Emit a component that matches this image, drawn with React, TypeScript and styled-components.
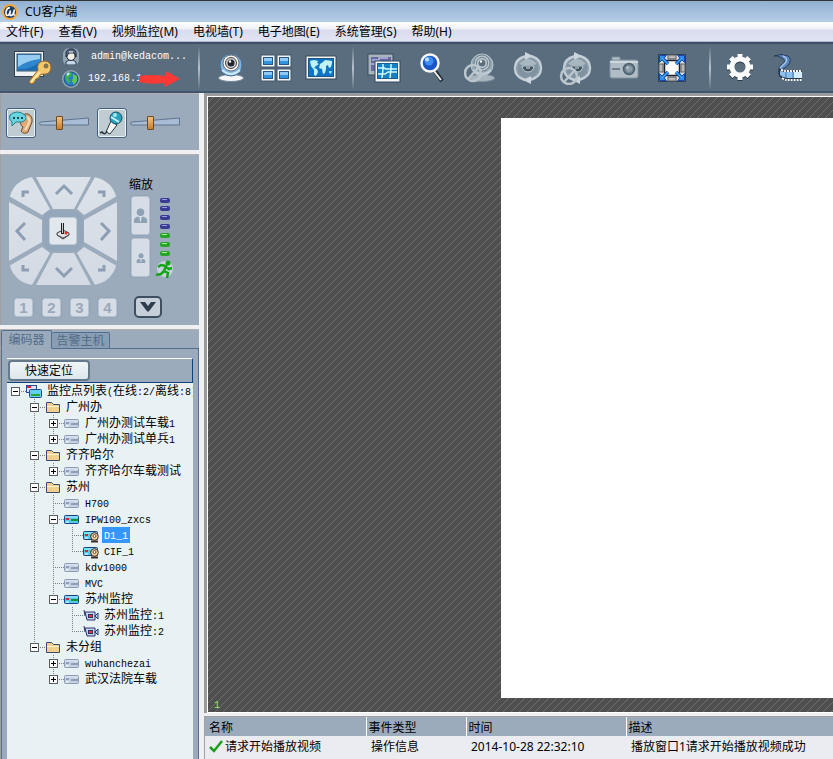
import React, { useState } from "react";
import styled, { createGlobalStyle, css } from "styled-components";

const CJK = '"Noto Sans CJK SC", sans-serif';

const GlobalStyle = createGlobalStyle`
  * { box-sizing: border-box; }
  body { margin: 0; font: 12px/16px "Noto Sans", ${CJK}; color: #000; }
  button { font: inherit; color: inherit; padding: 0; cursor: pointer; }
`;

/* ---------- frame ---------- */

const Shell = styled.div`
  display: flex;
  flex-direction: column;
  height: 100vh;
  overflow: hidden;
  background: #f0f0f2;
`;

const TitleBar = styled.header`
  display: flex;
  align-items: center;
  gap: 7px;
  height: 22px;
  flex: none;
  padding: 0 2px;
  border-top: 1px solid #333;
  background: linear-gradient(#92b0d1, #b5cee7);
`;

const Title = styled.h1`
  margin: 0;
  font-size: 12px;
  font-weight: 400;
`;

const MenuBar = styled.nav`
  display: flex;
  gap: 15px;
  height: 20px;
  flex: none;
  padding: 0 6px;
  border-bottom: 1px solid #b4b7c8;
  background: linear-gradient(#fff 0, #f0f2f8 7px, #d8dcee 8px, #e0e4f4 100%);
`;

const MenuItem = styled.button`
  border: 0;
  background: none;
  line-height: 19px;
  white-space: nowrap;
`;

const Toolbar = styled.div`
  display: flex;
  align-items: center;
  height: 51px;
  flex: none;
  border-top: 2px solid #3d4f6b;
  border-bottom: 2px solid #3f5570;
  background: #596d7e;
  overflow: hidden;
`;

const Login = styled.section`
  display: flex;
  align-items: center;
  width: 198px;
  flex: none;
  padding-left: 14px;
  gap: 10px;
`;

const LoginLines = styled.div`
  display: flex;
  flex-direction: column;
  gap: 2px;
`;

const LoginLine = styled.div<{ $gap: number }>`
  display: flex;
  align-items: center;
  gap: ${(p) => p.$gap}px;
  height: 20px;
  color: #fff;
  font: 10px/20px "Liberation Mono", monospace;
`;

const Address = styled.span`
  position: relative;
`;

const Redaction = styled.svg`
  position: absolute;
  left: 50px;
  top: 2px;
`;

const Divider = styled.div`
  width: 2px;
  height: 44px;
  flex: none;
  background: linear-gradient(#596d7e, #b5c2cc, #596d7e);
`;

const ToolGroup = styled.div<{ $pad: string }>`
  display: flex;
  flex: none;
  padding: ${(p) => p.$pad};
`;

const ToolButton = styled.button<{ $w: number }>`
  display: grid;
  place-items: center;
  width: ${(p) => p.$w}px;
  height: 40px;
  border: 0;
  background: none;
`;

const Body = styled.div`
  display: flex;
  flex: 1;
  min-height: 0;
`;

/* ---------- sidebar ---------- */

const Sidebar = styled.aside`
  display: flex;
  flex-direction: column;
  gap: 4px;
  width: 199px;
  flex: none;
  margin-right: 5px;
`;

const Panel = styled.section`
  background: #9babbc;
  border-top: 1px solid #b4b0b0;
  border-left: 1px solid #a19f9f;
`;

const AudioPanel = styled(Panel)`
  display: flex;
  gap: 8px;
  height: 57px;
  flex: none;
  padding: 14px 5px 0;
`;

const AudioUnit = styled.div`
  display: flex;
  align-items: center;
  gap: 3px;
  height: 30px;
`;

const AudioButton = styled.button`
  display: grid;
  place-items: center;
  width: 30px;
  height: 30px;
  border: 1px solid #3f6283;
  border-radius: 3px;
  background: #bfcdd3;
  box-shadow: inset 0 0 0 1px #f2f5f6;
`;

const SliderBox = styled.div`
  display: grid;
  width: 50px;
  height: 16px;

  > * { grid-area: 1 / 1; }
`;

const Range = styled.input`
  appearance: none;
  width: 50px;
  height: 16px;
  margin: 0;
  background: transparent;

  &::-webkit-slider-thumb {
    appearance: none;
    width: 7px;
    height: 14px;
    border: 1px solid #6b4a22;
    border-radius: 1px;
    background: linear-gradient(#f2c184, #c97f2e);
  }
`;

const PtzPanel = styled(Panel)`
  display: flex;
  flex-direction: column;
  gap: 11px;
  height: 171px;
  flex: none;
  padding: 22px 8px 0;
`;

const PtzRow = styled.div`
  display: flex;
  gap: 12px;
`;

const Pad = styled.div`
  display: grid;
  width: 108px;
  height: 108px;
  border-radius: 26px;
  overflow: hidden;

  > * { grid-area: 1 / 1; }
`;

const PadButton = styled.button<{ $shape: string }>`
  border: 0;
  background: linear-gradient(#dce2e9, #d3dae3);
  clip-path: polygon(${(p) => p.$shape});
`;

const PadArt = styled.svg`
  z-index: 1;
  pointer-events: none;
`;

const Stick = styled.button`
  display: grid;
  place-items: center;
  place-self: center;
  z-index: 1;
  width: 28px;
  height: 28px;
  border: 1px solid #c2ccd7;
  border-radius: 3px;
  background: #e2e7ed;
  outline: 6px solid #94a6b9;
`;

const Zoom = styled.div`
  display: grid;
  grid-template-columns: 20px auto;
  column-gap: 5px;
`;

const ZoomTitle = styled.div`
  grid-column: 1 / -1;
  height: 18px;
  line-height: 16px;
`;

const ZoomButtons = styled.div`
  display: flex;
  flex-direction: column;
  gap: 3px;
  padding-left: 2px;
`;

const softKey = css`
  display: grid;
  place-items: center;
  border: 1px solid #b7c2cf;
  border-radius: 3px;
  background: #d6dde6;
  box-shadow: 0 0 0 1px #93a5b9;
`;

const ZoomButton = styled.button`
  ${softKey}
  width: 19px;
  height: 39px;
`;

const PresetRow = styled.div`
  display: flex;
  align-items: center;
  gap: 9px;
  padding-left: 5px;
`;

const Preset = styled.button`
  ${softKey}
  width: 19px;
  height: 19px;
  color: #99a8ba;
  font: 700 15px/17px "Liberation Sans", sans-serif;
`;

const MoreButton = styled.button`
  display: grid;
  place-items: center;
  width: 28px;
  height: 22px;
  margin-left: 8px;
  border: 2px solid #3d4f60;
  border-radius: 5px;
  background: #c7d0da;
`;

const TreePanel = styled(Panel)`
  display: flex;
  flex-direction: column;
  flex: 1;
  min-height: 0;
`;

const Tabs = styled.div`
  display: flex;
  align-items: flex-end;
  height: 19px;
  flex: none;

  &::after {
    content: "";
    flex: 1;
    border-bottom: 1px solid #526f91;
  }
`;

const Tab = styled.button<{ $on?: boolean }>`
  height: ${(p) => (p.$on ? 19 : 17)}px;
  width: ${(p) => (p.$on ? 51 : 58)}px;
  border: 1px solid #526f91;
  border-bottom-color: ${(p) => (p.$on ? "#9babbc" : "#526f91")};
  border-left-width: ${(p) => (p.$on ? 1 : 0)}px;
  border-radius: 2px 2px 0 0;
  background: ${(p) => (p.$on ? "#9babbc" : "#899db3")};
  color: #526b88;
  line-height: 15px;
  white-space: nowrap;
`;

const TabBody = styled.div`
  display: flex;
  flex-direction: column;
  flex: 1;
  min-height: 0;
  padding: 9px 5px 0;
  border: solid #526f91;
  border-width: 0 1px;
`;

const LocateBar = styled.div`
  height: 25px;
  flex: none;
  padding: 1px;
  border: solid #12427c;
  border-width: 1px 1px 1px 0;
  border-top-color: #fff;
`;

const LocateButton = styled.button`
  display: block;
  width: 82px;
  height: 21px;
  border: 2px solid #65798a;
  border-radius: 4px;
  background: linear-gradient(#f1f6f7, #dce7eb);
  line-height: 17px;
`;

const Tree = styled.ul`
  flex: 1;
  min-height: 0;
  margin: 0;
  padding: 0;
  overflow: hidden;
  list-style: none;
  background: #e8f2f5;
`;

const Node = styled.li`
  display: flex;
  height: 16px;
  white-space: nowrap;

  > * { flex: none; }
`;

const dotted = (dir: string) => `repeating-linear-gradient(${dir}, #808080 0 1px, transparent 1px 2px)`;

const Guide = styled.span<{ $v: "none" | "half" | "full"; $h?: boolean }>`
  display: grid;
  place-items: center start;
  width: 19px;
  height: 16px;
  flex: none;
  padding-left: 4px;
  background:
    ${dotted("180deg")} 8px 0 / 1px ${(p) => ({ none: 0, half: 8, full: 16 })[p.$v]}px no-repeat,
    ${dotted("90deg")} 8px 8px / ${(p) => (p.$h ? 11 : 0)}px 1px no-repeat;
`;

const Expander = styled.button`
  display: block;
  width: 9px;
  height: 9px;
  border: 1px solid #5c5c5c;
  background:
    linear-gradient(#000, #000) center / 5px 1px no-repeat,
    linear-gradient(#000, #000) center / 1px ${(p) => (p["aria-expanded"] ? 1 : 5)}px no-repeat,
    #fff;
`;

const NodeLabel = styled.button<{ $on?: boolean }>`
  margin-left: 3px;
  padding: 0 2px;
  border: 0;
  background: ${(p) => (p.$on ? "#3397fd" : "none")};
  color: ${(p) => (p.$on ? "#fff" : "#000")};
  line-height: 16px;
  white-space: nowrap;
`;

const Mono = styled.span`
  font: 10px/16px "Liberation Mono", monospace;
`;

/* ---------- work area ---------- */

const Main = styled.main`
  display: flex;
  flex-direction: column;
  flex: 1;
  min-width: 0;
`;

const VideoWall = styled.section`
  position: relative;
  display: flex;
  flex: 1;
  min-height: 0;
  border: 3px solid #9a9a9a;
  border-width: 3px 0 0 3px;
  padding: 22px 0 15px;
  box-shadow: inset 1px 1px #fff, inset 0 -1px #fff;
  background: linear-gradient(135deg, transparent 45%, #6e6e6e 45% 55%, transparent 55%) 0 0 / 8px 8px, #4f4f4f;
`;

const Video = styled.div`
  flex: 1;
  margin-left: 47%;
  background: #fff;
`;

const WindowNo = styled.span`
  position: absolute;
  left: 7px;
  bottom: 0;
  color: #9be86e;
  font: 10px/14px "Liberation Mono", monospace;
`;

const LogPane = styled.section`
  height: 43px;
  flex: none;
  margin-top: 3px;
  border-top: 1px solid #a0a0a0;
  border-left: 1px solid #a0a0a0;
  overflow: hidden;
  background: #ebecf1;
`;

const LogTable = styled.table`
  width: 100%;
  table-layout: fixed;
  border-collapse: collapse;

  th {
    height: 19px;
    padding: 2px 3px 0 2px;
    border-left: 1px solid #fff;
    background: #9babbc;
    font-weight: 400;
    line-height: 16px;
    text-align: left;
  }
  th:first-child { border-left: 0; padding-left: 4px; }
  td {
    height: 20px;
    padding: 1px 0 0 5px;
    line-height: 16px;
    white-space: nowrap;
  }
  td:first-child { padding-left: 4px; }
`;

const Col = styled.col<{ $w?: number }>`
  width: ${(p) => (p.$w ? `${p.$w}px` : "auto")};
`;

const Event = styled.span`
  display: flex;
  align-items: center;
  gap: 2px;
`;

/* ---------- icons ---------- */

const Logo = () => (
  <svg width="16" height="16" viewBox="0 0 16 16">
    <circle cx="8" cy="8" r="8" fill="#f4a73a" />
    <circle cx="8" cy="8" r="6" fill="#173a63" />
    <path d="M8 4C4 3 2.500 11 5.500 11.500 7.500 11.500 8 8 8.500 6.500 7.500 10 7.500 12 9.500 11.500 11.500 10.500 12 7 12.500 5.500 11.800 8 11 11.500 13 11" fill="none" stroke="#fff" strokeWidth="1.600" />
  </svg>
);

const LoginIcon = () => (
  <svg width="38" height="36" viewBox="0 0 38 36">
    <rect x=".5" y="1.500" width="29" height="25" fill="#eef1f2" stroke="#2e4252" />
    <rect x="3" y="4" width="24" height="17" fill="#2e87cd" stroke="#39546c" />
    <path d="M4 5h22v4Q14 10 4 17z" fill="#97cdf1" />
    <path d="M4 19Q16 20 26 12v8H4z" fill="#1c6bb4" />
    <path d="M24 20Q22 12 30 11q7 0 7 7-1 7-8 6l-3 1-1 3-3 1-2 4-3 1-2-2 2-3z" fill="#f5c76c" stroke="#95692a" />
    <path d="M26 22l-9 10" stroke="#fff0b9" strokeWidth="1.500" />
    <circle cx="32" cy="16" r="2" fill="#6b7c80" stroke="#95692a" />
  </svg>
);

const UserIcon = () => (
  <svg width="18" height="18" viewBox="0 0 18 18">
    <rect x="1" y="0" width="16" height="18" rx="6" fill="#93a5b2" />
    <path d="M4 17v-3l3-2h4l3 2v3z" fill="#c7d7e7" stroke="#263b54" />
    <path d="M5 5q4-4 8 0v5q-4 5-8 0z" fill="#f4eee5" stroke="#202c3a" />
    <path d="M4 9V4q2-4 7-3 4 1 3 8l-2-4H7z" fill="#566883" stroke="#202c3a" />
    <path d="M7 4h4" stroke="#fff" />
  </svg>
);

const GlobeIcon = () => (
  <svg width="18" height="18" viewBox="0 0 18 18">
    <circle cx="9" cy="9" r="9" fill="#93a5b2" />
    <circle cx="9" cy="9" r="7" fill="#2a7cc8" stroke="#1b4c87" />
    <path d="M3 6l4-4 3 1-1 3-3 2 2 2-1 4-3-4z" fill="#3bb54b" />
    <path d="M11 4l4 2v5l-3 4-2-4 1-3z" fill="#5cc94c" />
    <path d="M5 5l2-2" stroke="#d4f1ff" strokeWidth="2" />
  </svg>
);

const CamBody = ({ grey }: { grey?: boolean }) => (
  <>
    <ellipse cx="16" cy="26" rx="12.500" ry="3.500" fill={grey ? "#a9b5bf" : "#f8f8f8"} stroke={grey ? "#8394a0" : "#718599"} />
    <circle cx="16" cy="13" r="11" fill={grey ? "#94a6b2" : "#7fb3df"} stroke={grey ? "#b9c6ce" : "#486f96"} />
    <path d="M7 18q9 8 18 0" stroke={grey ? "#c2cdd4" : "#cce9fb"} strokeWidth="2" fill="none" />
    <circle cx="16" cy="11" r="8" fill={grey ? "#bac6ce" : "#f7f7f5"} stroke={grey ? "#71838f" : "#6f6e70"} />
    <circle cx="16" cy="11" r="5.500" fill={grey ? "#c9d2d8" : "#d0d2d4"} stroke={grey ? "#657884" : "#454548"} />
    <circle cx="16" cy="11" r="3.500" fill={grey ? "#5b6e7c" : "#22262f"} />
    <circle cx="15" cy="9.500" r="1.200" fill="#fff" />
  </>
);

const Ban = () => (
  <g fill="none" stroke="#bac5cc" strokeWidth="2.500">
    <circle cx="9" cy="21" r="8" />
    <path d="M4 27L15 15" />
  </g>
);

const Webcam = () => <svg width="30" height="32" viewBox="1 0 30 32"><CamBody /></svg>;

const WebcamOff = () => (
  <svg width="32" height="32" viewBox="0 0 32 32">
    <g transform="translate(2 0)"><CamBody grey /></g>
    <Ban />
  </svg>
);

const GridIcon = () => (
  <svg width="32" height="28" viewBox="0 0 32 28">
    {[[1, 1], [17, 1], [1, 15], [17, 15]].map(([x, y]) => (
      <g key={`${x}-${y}`}>
        <rect x={x} y={y} width="14" height="12" fill="#f5f5f3" stroke="#42576b" />
        <rect x={x + 2.5} y={y + 2.5} width="9" height="7" fill="#3293df" stroke="#245985" />
        <path d={`M${x + 3} ${y + 3}h8v3h-8z`} fill="#8fc9f5" />
      </g>
    ))}
  </svg>
);

const MapIcon = () => (
  <svg width="32" height="26" viewBox="0 0 32 26">
    <rect x="1" y="1" width="30" height="23" fill="#f4f4f2" stroke="#34495c" />
    <rect x="3.500" y="3.500" width="25" height="18" fill="#0f74c3" stroke="#1d5683" />
    <path d="M5 6l4-1 4 1-1 2 2 1-3 2-2 2 3 1 1 3-2 4-2-1v-5l-3-4z" fill="#bff3f5" />
    <path d="M15 9l3-2 2-2 7 1v2l-1 4-2 1-1-3-2 1v3l-1 4-2 1-1-5-3-1z" fill="#bff3f5" />
    <path d="M24 16l3 0-1 3-2-1z" fill="#7adde8" />
  </svg>
);

const WallIcon = () => (
  <svg width="34" height="30" viewBox="0 0 34 30">
    <rect x="1" y="1" width="25" height="21" fill="#a9b4bb" stroke="#394d5e" />
    <rect x="4" y="4" width="20" height="14" fill="#6769a5" />
    <path d="M5 7h7v-2h9M4 11h4" stroke="#b3b6dc" strokeWidth="1.500" fill="none" />
    <rect x="8" y="8" width="25" height="21" fill="#f7f9f9" stroke="#30485d" />
    <rect x="10.500" y="10.500" width="20" height="15" fill="#1682c6" stroke="#1b5f93" />
    <path d="M11 15h6l2 1h11M11 21h7l3-2h9M16 11v5l-1 9M24 11v5l-1 9" fill="none" stroke="#d2fbfb" strokeWidth="1.500" />
  </svg>
);

const SearchIcon = () => (
  <svg width="24" height="30" viewBox="0 0 24 30">
    <path d="M15 18l7 10" stroke="#1e2a36" strokeWidth="4" />
    <path d="M14 18l7 9" stroke="#f2eee5" strokeWidth="2" />
    <circle cx="10" cy="10" r="8.500" fill="#1a55c8" stroke="#f7f7f7" strokeWidth="2.500" />
    <circle cx="9" cy="8" r="4.500" fill="#3f8cf0" />
    <circle cx="7" cy="6.500" r="2" fill="#c0e0ff" />
  </svg>
);

const CycleBody = () => (
  <>
    <circle cx="16" cy="17" r="11" fill="#8093a1" stroke="#93a5b1" />
    <path d="M7 13q9-10 18 0l-3 1H10z" fill="#a9b7c1" />
    <path d="M10 15h12q-1 6-6 6t-6-6z" fill="#42535f" stroke="#c2ccd2" />
    <path d="M14 15h4v3h-4z" fill="#8fa0ac" />
    <path d="M13 29Q3 26 3 17T14 5" fill="none" stroke="#c3ced6" strokeWidth="2.500" />
    <path d="M19 5Q29 8 29 17T18 29" fill="none" stroke="#c3ced6" strokeWidth="2.500" />
    <path d="M13 1l8 4-8 4zM19 25l-8 4 8 4z" fill="#cbd5dc" />
  </>
);

const Cycle = () => <svg width="32" height="34" viewBox="0 0 32 34"><CycleBody /></svg>;

const CycleOff = () => (
  <svg width="34" height="34" viewBox="0 0 34 34">
    <g transform="translate(2 0)"><CycleBody /></g>
    <g transform="translate(1 4)"><Ban /></g>
  </svg>
);

const CameraIcon = () => (
  <svg width="30" height="24" viewBox="0 0 30 24">
    <path d="M3 4V1h8v3" fill="#b7c3cb" stroke="#7a8c99" />
    <rect x="1" y="4" width="28" height="18" rx="2" fill="#b0bdc6" stroke="#82939f" />
    <path d="M1 6h28" stroke="#ced7dd" strokeWidth="2" />
    <path d="M3 13h8" stroke="#596d7e" strokeWidth="1.500" />
    <circle cx="20" cy="13" r="5.500" fill="#708391" stroke="#4c6170" strokeWidth="1.500" />
    <circle cx="20" cy="13" r="3" fill="#8fa0ac" />
    <circle cx="18.500" cy="11.500" r="1" fill="#dfe7eb" />
  </svg>
);

const ExpandIcon = () => (
  <svg width="28" height="28" viewBox="0 0 28 28">
    <rect x=".5" y=".5" width="27" height="27" fill="#dededd" stroke="#2e4050" />
    <path d="M10 1h8v4h-8zM10 23h8v4h-8zM1 10h4v8H1zM23 10h4v8h-4z" fill="#b9b9b8" stroke="#5a5f64" />
    <rect x="6.500" y="6.500" width="15" height="15" rx="2" fill="#fafafa" stroke="#1c2228" strokeWidth="1.500" />
    {[0, 90, 180, 270].map((a) => (
      <g key={a} transform={`rotate(${a} 14 14)`}>
        <path d="M4 4l6 6" stroke="#1649b0" strokeWidth="3.500" />
        <path d="M1.500 1.500h7l-7 7z" fill="#2f8cf4" stroke="#1649b0" />
        <path d="M4 4l6 6" stroke="#3fb2fa" strokeWidth="1.500" />
      </g>
    ))}
  </svg>
);

const GearIcon = () => (
  <svg width="28" height="28" viewBox="0 0 28 28">
    {[["#2c3845", 1], ["#fafafa", 0]].map(([c, dy]) => (
      <g key={c} transform={`translate(0 ${dy})`} fill="none" stroke={c as string}>
        <circle cx="14" cy="13" r="8" strokeWidth="5" />
        {[0, 45, 90, 135, 180, 225, 270, 315].map((a) => (
          <path key={a} d="M14 0v4" strokeWidth="5" transform={`rotate(${a} 14 13)`} />
        ))}
      </g>
    ))}
  </svg>
);

const FilmIcon = () => (
  <svg width="30" height="28" viewBox="0 0 30 28">
    <path d="M1 2Q8-1 15 2q4 3 1 8-2 3-6 5l-3 8q-3-4-1-9 1-3 5-5 2-3-2-5Q5 1 1 2z" fill="#5d86bd" stroke="#243c5e" />
    <path d="M10 2q5 2 3 6l-6 6" fill="none" stroke="#a4c4ea" strokeWidth="1.500" />
    <path d="M6 14q2 2 7 2h16v11H14q-7-2-8-6z" fill="#2b3948" />
    <path d="M7 17q3 1 6 1h16v6H14q-5-1-7-3z" fill="#8dc0ee" />
    <path d="M21 18h8v6h-8z" fill="#d3ecff" />
    <path d="M8 16q3 1 5 1h16M9 24q3 2 5 2h15" fill="none" stroke="#fff" strokeWidth="2" strokeDasharray="2 1" />
    <path d="M13 18v6M20 18v6" stroke="#4573a3" />
  </svg>
);

const EarIcon = () => (
  <svg width="26" height="26" viewBox="0 0 26 26">
    <path d="M13 8q2-5 7-4 5 2 4 8l-4 10q-4 3-7-1l2-4q-4-3-2-9z" fill="#dfab77" stroke="#714b2d" />
    <path d="M15 10q2-4 5-2 3 3 0 7l-3 5" fill="none" stroke="#f6dcbb" strokeWidth="2" />
    <path d="M2 5q7-6 15 0 3 5-3 7H8l-4 4v-4q-4-3-2-7z" fill="#69d5df" stroke="#247e91" />
    <path d="M5 8h2M9 8h2M13 8h2" stroke="#174957" strokeWidth="2" />
  </svg>
);

const MicIcon = () => (
  <svg width="26" height="26" viewBox="0 0 26 26">
    <path d="M12 11l6 4-7 9-4-2z" fill="#f4f6f6" stroke="#28343c" />
    <path d="M8 21q-2 5-5 1l-2 1" fill="none" stroke="#28343c" strokeWidth="1.500" />
    <circle cx="17" cy="8" r="6" fill="#28a3bd" stroke="#174f65" />
    <path d="M12 7l8 5" stroke="#caf4f8" strokeWidth="2" />
    <circle cx="16" cy="5" r="2" fill="#a4e8f0" />
  </svg>
);

const Wedge = () => (
  <svg width="50" height="16" viewBox="0 0 50 16">
    <path d="M.5 8q0-1 2-1l47-4v7h-47Q.5 10 .5 8z" fill="#a8bcd6" stroke="#5f748e" />
  </svg>
);

const StickIcon = () => (
  <svg width="14" height="18" viewBox="0 0 14 18">
    <path d="M1 11l6-3 6 3v2l-6 4-6-4z" fill="#e2e2e2" stroke="#3a3a3a" />
    <path d="M1 13l6 3 6-3" fill="none" stroke="#555" />
    <path d="M6.500 12V1" stroke="#222" strokeWidth="3" />
    <path d="M6.500 11V1" stroke="#ccc" />
    <circle cx="10" cy="11" r="1.500" fill="#e52a1d" />
  </svg>
);

const Person = ({ size }: { size: number }) => (
  <svg width={size} height={size} viewBox="0 0 16 16">
    <circle cx="8" cy="4.500" r="4" fill="#8fa1b5" />
    <path d="M1 16v-4q1-2 4-3l3 2 3-2q3 1 4 3v4z" fill="#8fa1b5" />
    <path d="M7 11h2l-1 5z" fill="#e5eaf0" />
  </svg>
);

const SpeedScale = () => (
  <svg width="22" height="88" viewBox="0 0 22 88">
    {[4, 12, 21, 30, 39, 48, 57].map((y, i) => (
      <g key={y}>
        <rect x="6" y={y - 2} width="10" height="5" rx="2" fill={i < 4 ? "#3a3a91" : "#28a428"} />
        <path d={`M8 ${y - 0.5}h5`} stroke={i < 4 ? "#9a9ae0" : "#a5f08c"} />
      </g>
    ))}
    <circle cx="11" cy="73" r="8" fill="#d8e4e8" opacity=".7" />
    <circle cx="14" cy="67" r="2.500" fill="#16a516" />
    <path d="M4 71l3-2 5 1-2 5 4 2-1 5M10 75l-3 3-5 1M12 71l3 2 3-1" fill="none" stroke="#16a516" strokeWidth="2.500" />
  </svg>
);

const Chevron = () => (
  <svg width="18" height="12" viewBox="0 0 18 12">
    <path d="M1 1h5l3 4 3-4h5l-6 8-2 2-2-2z" fill="#2c3d4d" />
  </svg>
);

const Check = () => (
  <svg width="14" height="13" viewBox="0 0 14 13">
    <path d="M1 7l4 4L13 1" fill="none" stroke="#1c9c1c" strokeWidth="2.500" />
  </svg>
);

type Kind = "root" | "folder" | "off" | "on" | "cast" | "cam";

const NodeIcon = ({ kind }: { kind: Kind }) => {
  const dead = kind === "off";
  return (
    <svg width="16" height="16" viewBox="0 0 16 16">
      {kind === "folder" && (
        <>
          <path d="M1.500 13.500v-10h5l2 2h6v8z" fill="#f3cf8d" stroke="#3b4a70" />
          <path d="M2 7h12v1H2z" fill="#fff3d2" />
        </>
      )}
      {kind === "root" && (
        <>
          <rect x=".5" y="2.500" width="10" height="7" fill="#dce6f8" stroke="#2c4a9c" />
          <path d="M1 4h4" stroke="#d42a2a" strokeWidth="2" />
          <rect x="3.500" y="6.500" width="12" height="8" rx="1" fill="#5fd0ee" stroke="#1c4c8c" />
          <path d="M5 11h9v2H5z" fill="#2ba52b" />
        </>
      )}
      {(kind === "off" || kind === "on" || kind === "cast") && (
        <>
          <rect x=".5" y="4.500" width="14" height="8" rx="1" fill={dead ? "#c4d0e0" : "#56c8ee"} stroke={dead ? "#8b9cba" : "#1c3f80"} />
          <path d="M1 6h13" stroke={dead ? "#e6edf5" : "#b7f0ff"} />
          <path d="M2 8h3" stroke={dead ? "#8ea0bd" : "#d42a2a"} strokeWidth="2" />
          <path d="M7 9h7" stroke={dead ? "#8ea0bd" : "#17942e"} strokeWidth="2" />
          <path d="M2 11h3" stroke="#fff" />
        </>
      )}
      {kind === "cast" && (
        <>
          <circle cx="11.500" cy="9.500" r="3.800" fill="#f3d49b" stroke="#3f2d24" />
          <circle cx="11.500" cy="9" r="1.500" fill="#fff" stroke="#684327" />
          <path d="M8 14.500h7" stroke="#3f2d24" strokeWidth="2" />
        </>
      )}
      {kind === "cam" && (
        <>
          <path d="M1 3l1 6M2 5h10v8H4z" fill="#c8d4ee" stroke="#263469" />
          <path d="M12 9l3-3v6z" fill="#c8d4ee" stroke="#263469" />
          <rect x="5.500" y="7.500" width="4" height="3" fill="#f13434" stroke="#263469" />
        </>
      )}
    </svg>
  );
};

/* ---------- data ---------- */

const menus = ["文件(F)", "查看(V)", "视频监控(M)", "电视墙(T)", "电子地图(E)", "系统管理(S)", "帮助(H)"];

const viewTools = [
  { label: "监控", Icon: Webcam },
  { label: "电视墙", Icon: GridIcon },
  { label: "电子地图", Icon: MapIcon },
];

const playTools = [
  { label: "画面风格", Icon: WallIcon },
  { label: "查找", Icon: SearchIcon },
  { label: "停止浏览", Icon: WebcamOff },
  { label: "轮询", Icon: Cycle },
  { label: "停止轮询", Icon: CycleOff },
  { label: "抓拍", Icon: CameraIcon },
  { label: "全屏", Icon: ExpandIcon },
];

const sysTools = [
  { label: "设置", Icon: GearIcon },
  { label: "录像", Icon: FilmIcon },
];

interface Row {
  depth: number;
  label: string;
  kind: Kind;
  open?: boolean;
}

const rows: Row[] = [
  { depth: 0, label: "监控点列表(在线:2/离线:8)", kind: "root", open: true },
  { depth: 1, label: "广州办", kind: "folder", open: true },
  { depth: 2, label: "广州办测试车载1", kind: "off", open: false },
  { depth: 2, label: "广州办测试单兵1", kind: "off", open: false },
  { depth: 1, label: "齐齐哈尔", kind: "folder", open: true },
  { depth: 2, label: "齐齐哈尔车载测试", kind: "off", open: false },
  { depth: 1, label: "苏州", kind: "folder", open: true },
  { depth: 2, label: "H700", kind: "off" },
  { depth: 2, label: "IPW100_zxcs", kind: "on", open: true },
  { depth: 3, label: "D1_1", kind: "cast" },
  { depth: 3, label: "CIF_1", kind: "cast" },
  { depth: 2, label: "kdv1000", kind: "off" },
  { depth: 2, label: "MVC", kind: "off" },
  { depth: 2, label: "苏州监控", kind: "on", open: true },
  { depth: 3, label: "苏州监控:1", kind: "cam" },
  { depth: 3, label: "苏州监控:2", kind: "cam" },
  { depth: 1, label: "未分组", kind: "folder", open: true },
  { depth: 2, label: "wuhanchezai", kind: "off", open: false },
  { depth: 2, label: "武汉法院车载", kind: "off", open: false },
];

const hasNext = (index: number, depth: number) => {
  for (let i = index + 1; i < rows.length; i++) {
    if (rows[i].depth < depth) return false;
    if (rows[i].depth === depth) return true;
  }
  return false;
};

const directions = [
  { label: "左上", shape: "0 0, 23px 0, 41px 32px, 33px 38px, 0 19px" },
  { label: "上", shape: "27px 0, 82px 0, 65px 32px, 44px 32px" },
  { label: "右上", shape: "86px 0, 108px 0, 108px 19px, 75px 38px, 68px 32px" },
  { label: "左", shape: "0 25px, 33px 43px, 33px 65px, 0 84px" },
  { label: "右", shape: "108px 25px, 75px 43px, 75px 65px, 108px 84px" },
  { label: "左下", shape: "0 89px, 33px 70px, 41px 76px, 23px 108px, 0 108px" },
  { label: "下", shape: "27px 108px, 44px 76px, 65px 76px, 82px 108px" },
  { label: "右下", shape: "108px 89px, 75px 70px, 68px 76px, 86px 108px, 108px 108px" },
];

const logs = [
  { name: "请求开始播放视频", type: "操作信息", time: "2014-10-28 22:32:10", text: "播放窗口1请求开始播放视频成功" },
  { name: "停止播放视频", type: "操作信息", time: "2014-10-28 22:32:10", text: "播放窗口1停止播放视频成功" },
];

/* ---------- parts ---------- */

const MixedText = ({ text }: { text: string }) => (
  <>
    {text.split(/([\x20-\x7e]+)/).map((part, i) => (i % 2 ? <Mono key={i}>{part}</Mono> : part))}
  </>
);

const ToolSet = ({ tools, pad, width }: { tools: typeof viewTools; pad: string; width: number }) => (
  <ToolGroup $pad={pad}>
    {tools.map(({ label, Icon }) => (
      <ToolButton key={label} $w={width} aria-label={label}><Icon /></ToolButton>
    ))}
  </ToolGroup>
);

const Volume = ({ label, children }: { label: string; children: React.ReactNode }) => (
  <AudioUnit>
    <AudioButton aria-label={label}>{children}</AudioButton>
    <SliderBox>
      <Wedge />
      <Range type="range" aria-label={`${label}音量`} defaultValue={40} />
    </SliderBox>
  </AudioUnit>
);

export default function App() {
  const [selected, setSelected] = useState("D1_1");

  return (
    <Shell>
      <GlobalStyle />
      <TitleBar>
        <Logo />
        <Title>CU客户端</Title>
      </TitleBar>
      <MenuBar>
        {menus.map((m) => <MenuItem key={m}>{m}</MenuItem>)}
      </MenuBar>
      <Toolbar>
        <Login>
          <LoginIcon />
          <LoginLines>
            <LoginLine $gap={11}><UserIcon />admin@kedacom...</LoginLine>
            <LoginLine $gap={8}>
              <GlobeIcon />
              <Address>
                192.168.1
                <Redaction width="44" height="16" viewBox="0 0 44 16">
                  <path d="M1 5q13-2 26 0l1-5 14 8-15 8-1-4q-13 2-25-1z" fill="#fb3a35" />
                </Redaction>
              </Address>
            </LoginLine>
          </LoginLines>
        </Login>
        <Divider />
        <ToolSet tools={viewTools} pad="0 9px 0 8px" width={45} />
        <Divider />
        <ToolSet tools={playTools} pad="0 13px 0 6px" width={48} />
        <Divider />
        <ToolSet tools={sysTools} pad="0 5px" width={48} />
      </Toolbar>
      <Body>
        <Sidebar>
          <AudioPanel>
            <Volume label="监听"><EarIcon /></Volume>
            <Volume label="呼叫"><MicIcon /></Volume>
          </AudioPanel>
          <PtzPanel>
            <PtzRow>
              <Pad>
                {directions.map((d) => <PadButton key={d.label} $shape={d.shape} aria-label={d.label} />)}
                <PadArt width="108" height="108" viewBox="0 0 108 108">
                  <g fill="none" stroke="#8c9eb3" strokeWidth="3">
                    <path d="M47 17l8-8 8 8" />
                    <path d="M47 91l8 8 8-8" />
                    <path d="M16 46l-8 8 8 9" />
                    <path d="M92 46l8 8-8 9" />
                    <path d="M14 20v-5h6M89 15h6v5M14 88v5h6M95 88v5h-6" />
                  </g>
                </PadArt>
                <Stick aria-label="复位"><StickIcon /></Stick>
              </Pad>
              <Zoom>
                <ZoomTitle>缩放</ZoomTitle>
                <ZoomButtons>
                  <ZoomButton aria-label="放大"><Person size={15} /></ZoomButton>
                  <ZoomButton aria-label="缩小"><Person size={10} /></ZoomButton>
                </ZoomButtons>
                <SpeedScale />
              </Zoom>
            </PtzRow>
            <PresetRow>
              {[1, 2, 3, 4].map((n) => <Preset key={n}>{n}</Preset>)}
              <MoreButton aria-label="更多"><Chevron /></MoreButton>
            </PresetRow>
          </PtzPanel>
          <TreePanel>
            <Tabs>
              <Tab $on>编码器</Tab>
              <Tab>告警主机</Tab>
            </Tabs>
            <TabBody>
              <LocateBar>
                <LocateButton>快速定位</LocateButton>
              </LocateBar>
              <Tree>
                {rows.map((row, i) => (
                  <Node key={row.label}>
                    {Array.from({ length: row.depth }, (_, d) => (
                      <Guide key={d} $v={d > 0 && hasNext(i, d) ? "full" : "none"} />
                    ))}
                    <Guide $h $v={row.depth === 0 ? "none" : hasNext(i, row.depth) ? "full" : "half"}>
                      {row.open !== undefined && <Expander aria-expanded={row.open} aria-label={row.label} />}
                    </Guide>
                    <NodeIcon kind={row.kind} />
                    <NodeLabel $on={selected === row.label} onClick={() => setSelected(row.label)}>
                      <MixedText text={row.label} />
                    </NodeLabel>
                  </Node>
                ))}
              </Tree>
            </TabBody>
          </TreePanel>
        </Sidebar>
        <Main>
          <VideoWall>
            <Video />
            <WindowNo>1</WindowNo>
          </VideoWall>
          <LogPane>
            <LogTable>
              <colgroup>
                <Col $w={161} />
                <Col $w={100} />
                <Col $w={160} />
                <Col />
              </colgroup>
              <thead>
                <tr><th>名称</th><th>事件类型</th><th>时间</th><th>描述</th></tr>
              </thead>
              <tbody>
                {logs.map((l) => (
                  <tr key={l.name}>
                    <td><Event><Check />{l.name}</Event></td>
                    <td>{l.type}</td>
                    <td>{l.time}</td>
                    <td>{l.text}</td>
                  </tr>
                ))}
              </tbody>
            </LogTable>
          </LogPane>
        </Main>
      </Body>
    </Shell>
  );
}
